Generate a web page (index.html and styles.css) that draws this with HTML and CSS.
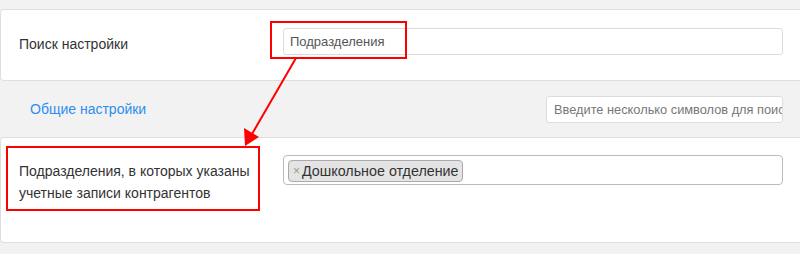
FILE: index.html
```html
<!DOCTYPE html>
<html lang="ru">
<head>
<meta charset="utf-8">
<link rel="stylesheet" href="styles.css">
</head>
<body>
<div class="page">
  <section class="card search-card">
    <div class="label">Поиск настройки</div>
    <div class="field"><div class="input">Подразделения</div></div>
  </section>
  <section class="group-bar">
    <a class="group-link" href="#">Общие настройки</a>
    <div class="input small placeholder">Введите несколько символов для поиска</div>
  </section>
  <section class="card setting-card">
    <div class="label two-line">Подразделения, в которых указаны учетные записи контрагентов</div>
    <div class="field">
      <div class="select">
        <span class="tag"><span class="tag-x">×</span>Дошкольное отделение</span>
      </div>
    </div>
  </section>
  <svg class="annot" width="800" height="254" viewBox="0 0 800 254">
    <rect x="271" y="22" width="135" height="36" fill="none" stroke="#f00" stroke-width="2"/>
    <rect x="7" y="147" width="252" height="63" fill="none" stroke="#f00" stroke-width="2"/>
    <line x1="296" y1="58" x2="252" y2="134" stroke="#f00" stroke-width="2"/>
    <polygon points="245,146 244,128 259,137" fill="#f00"/>
  </svg>
</div>
</body>
</html>
```
FILE: styles.css
```css
html, body {
  margin: 0;
  padding: 0;
}
body {
  background: #f2f2f2;
  font-family: "Liberation Sans", Arial, sans-serif;
  font-size: 14px;
  color: #333;
  width: 800px;
  height: 254px;
  overflow: hidden;
}
.page {
  position: relative;
  padding-top: 9px;
}
.card {
  background: #fff;
  border: 1px solid #dedede;
  border-right: none;
  border-radius: 4px 0 0 4px;
  display: flex;
  align-items: flex-start;
}
.search-card {
  height: 70px;
}
.search-card .label {
  padding-top: 23px;
}
.search-card .field {
  padding-top: 18px;
}
.label {
  width: 264px;
  padding-left: 18px;
  flex: none;
  line-height: 22px;
}
.field {
  flex: 1;
  padding-right: 17px;
}
.input {
  box-sizing: border-box;
  height: 27px;
  border: 1px solid #dcdcdc;
  border-radius: 3px;
  background: #fff;
  padding: 0 6px;
  line-height: 25px;
  font-size: 13px;
  color: #555;
  white-space: nowrap;
  overflow: hidden;
}
.group-bar {
  height: 56px;
  display: flex;
  align-items: center;
  justify-content: space-between;
  padding: 0 17px 0 30px;
}
.group-link {
  color: #2b8ef0;
  text-decoration: none;
  font-size: 14px;
  margin-top: -1px;
}
.input.small {
  width: 237px;
  padding: 0 7px;
  font-size: 12.8px;
}
.placeholder {
  color: #777;
}
.setting-card {
  height: 104px;
}
.two-line {
  padding-top: 22px;
  width: 238px;
  padding-right: 26px;
}
.setting-card .field {
  padding-top: 17px;
}
.select {
  box-sizing: border-box;
  height: 30px;
  border: 1px solid #bbb;
  border-radius: 4px;
  background: #fff;
  padding: 4px 4px;
  display: flex;
  align-items: flex-start;
}
.tag {
  display: inline-flex;
  align-items: center;
  height: 22px;
  box-sizing: border-box;
  background: #e4e4e4;
  border: 1px solid #aaa;
  border-radius: 4px;
  padding: 0 3px 0 4px;
  font-size: 14.3px;
  color: #333;
  line-height: 20px;
  white-space: nowrap;
}
.tag-x {
  color: #999;
  font-size: 12px;
  margin-right: 2px;
}
.annot {
  position: absolute;
  left: 0;
  top: 0;
  pointer-events: none;
}
```
